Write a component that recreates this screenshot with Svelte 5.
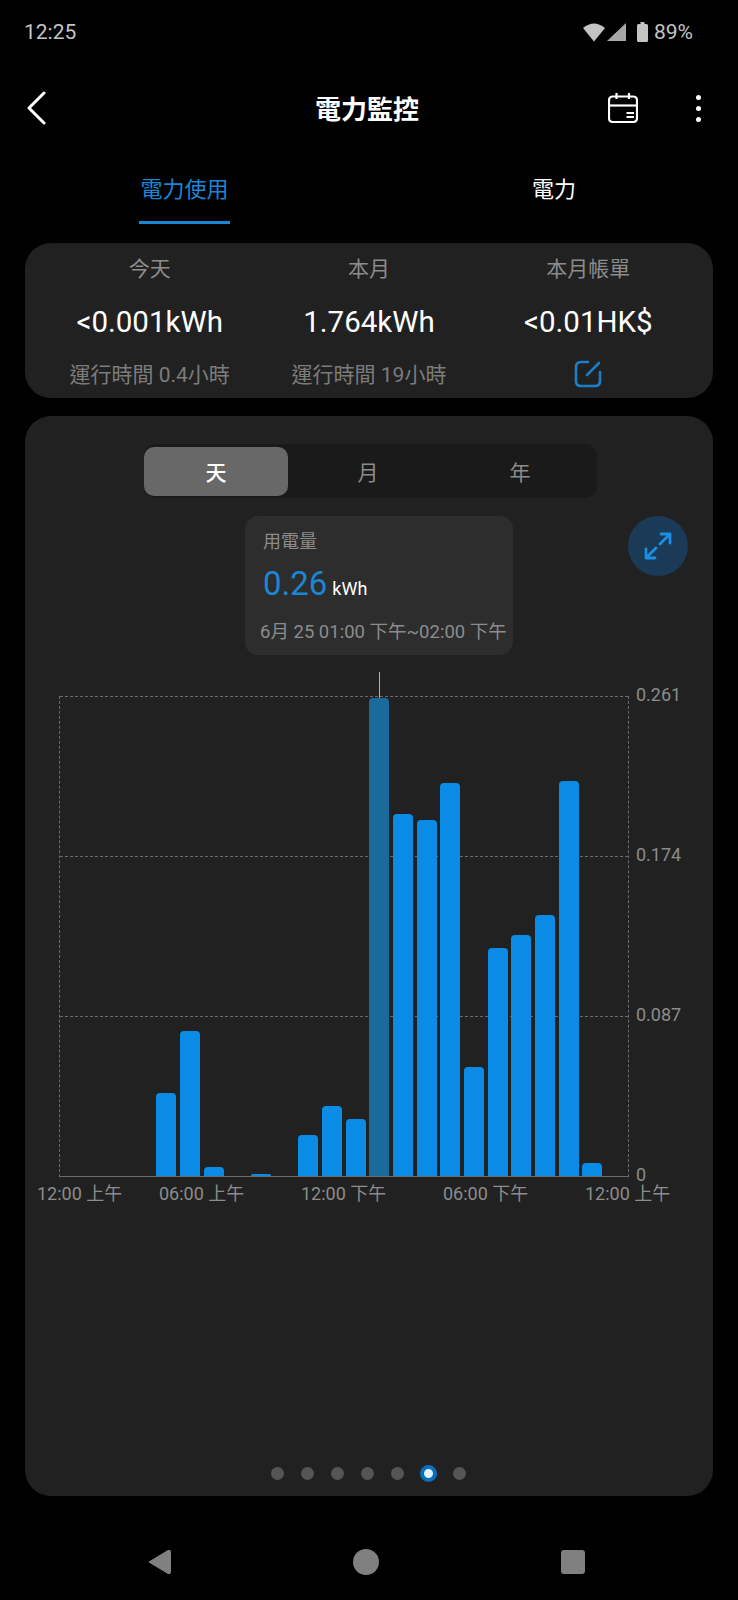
<script lang="ts">
	const stats = [
		{ label: '今天', value: '<0.001kWh', sub: '運行時間 0.4小時' },
		{ label: '本月', value: '1.764kWh', sub: '運行時間 19小時' },
		{ label: '本月帳單', value: '<0.01HK$', sub: '' }
	]

	// bar height in px, one per hour of the day
	const hours = [0, 0, 0, 0, 83, 145, 9, 0, 2, 0, 41, 70, 57, 478, 362, 356, 393, 109, 228, 241, 261, 395, 13, 0]
	const selectedHour = 13

	const yLabels = ['0.261', '0.174', '0.087', '0']
	const xLabels = ['12:00 上午', '06:00 上午', '12:00 下午', '06:00 下午', '12:00 上午']
	const dots = [0, 1, 2, 3, 4, 5, 6]
	const activeDot = 5
</script>

<div class="screen">
	<header class="status-bar">
		<span class="clock">12:25</span>
		<div class="status-icons">
			<svg width="22" height="20" viewBox="0 0 22 20"><path d="M0 6 Q11 -3 22 6 L11 19.500 Z" fill="#c4c4c4" /></svg>
			<svg class="signal" width="19" height="20" viewBox="0 0 19 20"><path d="M19 1 V19 H0 Z" fill="#a8a8a8" /></svg>
			<svg class="battery" width="11" height="20" viewBox="0 0 11 20"><path d="M3.500 0 H7.500 V2 H9.500 Q11 2 11 3.500 V18.500 Q11 20 9.500 20 H1.500 Q0 20 0 18.500 V3.500 Q0 2 1.500 2 H3.500 Z" fill="#c4c4c4" /></svg>
			<span class="battery-level">89%</span>
		</div>
	</header>

	<nav class="app-bar">
		<svg class="back" width="20" height="34" viewBox="0 0 20 34" fill="none" stroke="#fff" stroke-width="3" stroke-linecap="round" stroke-linejoin="round"><path d="M17 2 L2 17 L17 32" /></svg>
		<h1 class="title">電力監控</h1>
		<svg class="calendar" width="30" height="30" viewBox="0 0 30 30" fill="none" stroke="#fff" stroke-width="2.200" stroke-linejoin="round"><path d="M5 3.500 H25 Q29 3.500 29 7.500 V25 Q29 29 25 29 H5 Q1 29 1 25 V7.500 Q1 3.500 5 3.500 Z" /><path d="M1 12.500 H29" /><path d="M8.500 0 V6 M21 0 V6" /><path d="M18.500 20 H26 M18.500 24 H26" stroke-width="2" /></svg>
		<div class="more"><span></span><span></span><span></span></div>
	</nav>

	<div class="tabs">
		<div class="tab active">電力使用</div>
		<div class="tab">電力</div>
	</div>

	<section class="card summary">
		{#each stats as stat}
			<div class="stat">
				<div class="stat-label">{stat.label}</div>
				<div class="stat-value">{stat.value}</div>
				{#if stat.sub}
					<div class="stat-sub">{stat.sub}</div>
				{:else}
					<svg class="edit" width="28" height="28" viewBox="0 0 28 28" fill="none" stroke="#1a7fc8" stroke-width="2.600" stroke-linecap="round" stroke-linejoin="round"><path d="M14 2 H7 Q2 2 2 7 V21 Q2 26 7 26 H21 Q26 26 26 21 V12" /><path d="M13 15 L25 3" /></svg>
				{/if}
			</div>
		{/each}
	</section>

	<section class="card chart-card">
		<div class="segment">
			<div class="segment-item active">天</div>
			<div class="segment-item">月</div>
			<div class="segment-item">年</div>
		</div>

		<div class="readout-row">
			<div class="readout">
				<div class="readout-title">用電量</div>
				<div class="readout-value"><span class="num">0.26</span> <span class="unit">kWh</span></div>
				<div class="readout-date">6月 25 01:00 下午~02:00 下午</div>
			</div>
			<button class="expand" aria-label="expand">
				<svg width="30" height="30" viewBox="0 0 30 30" fill="none" stroke="#1a8fe3" stroke-width="2.800" stroke-linecap="round" stroke-linejoin="round"><path d="M18 3 H27 V12 M27 3 L17 13" /><path d="M3 18 V27 H12 M3 27 L13 17" /></svg>
			</button>
		</div>

		<div class="chart">
			<div class="plot">
				<div class="gridline"></div>
				<div class="gridline"></div>
				<div class="gridline"></div>
				<div class="bars">
					{#each hours as h, i}
						<div class="slot">
							{#if i === selectedHour}
								<div class="cursor"></div>
							{/if}
							{#if h > 0}
								<div class="bar" class:selected={i === selectedHour} style="height: {h}px"></div>
							{/if}
						</div>
					{/each}
				</div>
			</div>
			<div class="y-axis">
				{#each yLabels as label}
					<span>{label}</span>
				{/each}
			</div>
		</div>

		<div class="x-axis">
			{#each xLabels as label}
				<span>{label}</span>
			{/each}
		</div>

		<div class="pager">
			{#each dots as d}
				<span class="dot" class:active={d === activeDot}></span>
			{/each}
		</div>
	</section>

	<footer class="nav-bar">
		<svg width="24" height="26" viewBox="0 0 24 26"><path d="M2 13 L21 1.500 Q23.500 0.500 23.500 3 V23 Q23.500 25.500 21 24.500 Z" fill="#808080" stroke="#808080" stroke-linejoin="round" /></svg>
		<span class="nav-home"></span>
		<span class="nav-recent"></span>
	</footer>
</div>

<style>
	:global(body) {
		margin: 0;
		background: #000;
	}

	.screen {
		width: 738px;
		height: 1600px;
		background: #000;
		color: #fff;
		font-family: Roboto, 'Noto Sans CJK TC', sans-serif;
		overflow: hidden;
		display: flex;
		flex-direction: column;
	}

	.status-bar {
		height: 64px;
		flex: none;
		padding: 0 45px 0 24px;
		display: flex;
		justify-content: space-between;
		align-items: center;
		color: #c4c4c4;
		font-size: 21px;
		box-sizing: border-box;
	}

	.status-icons {
		display: flex;
		align-items: center;
	}

	.signal {
		margin-left: 2px;
	}

	.battery {
		margin-left: 11px;
		margin-right: 6px;
	}

	.app-bar {
		height: 92px;
		flex: none;
		padding: 0 37px 0 27px;
		display: flex;
		align-items: center;
		box-sizing: border-box;
	}

	.back,
	.calendar,
	.more {
		margin-bottom: 4px;
	}

	.title {
		flex: 1;
		margin: 0 0 5px;
		text-align: center;
		font-size: 26px;
		font-weight: 700;
		padding-left: 79px;
	}

	.calendar {
		margin-right: 58px;
	}

	.more {
		display: flex;
		flex-direction: column;
		gap: 6px;
		width: 5px;
	}

	.more span {
		width: 5px;
		height: 5px;
		border-radius: 50%;
		background: #fff;
	}

	.tabs {
		height: 67px;
		flex: none;
		padding-left: 139px;
		display: flex;
	}

	.tab {
		font-size: 22px;
		height: 67px;
		line-height: 68px;
	}

	.tab.active {
		width: 91px;
		color: #1a87d6;
		text-align: center;
		position: relative;
		margin-right: 302px;
	}

	.tab.active::after {
		content: '';
		position: absolute;
		left: 0;
		right: 0;
		top: 65px;
		height: 3px;
		background: #1a87d6;
	}

	.card {
		margin: 0 25px;
		background: #212121;
		border-radius: 26px;
	}

	.summary {
		height: 155px;
		flex: none;
		margin-top: 20px;
		padding: 0 15px;
		display: grid;
		grid-template-columns: repeat(3, 1fr);
		box-sizing: border-box;
	}

	.stat {
		display: flex;
		flex-direction: column;
		align-items: center;
	}

	.stat-label {
		font-size: 21px;
		color: #8c8c8c;
		height: 52px;
		line-height: 52px;
	}

	.stat-value {
		font-size: 29.500px;
		height: 54px;
		line-height: 54px;
	}

	.stat-sub {
		font-size: 21px;
		color: #7c7c7c;
		height: 49px;
		line-height: 53px;
	}

	.edit {
		margin-top: 11px;
	}

	.chart-card {
		margin-top: 18px;
		height: 1080px;
		flex: none;
		padding: 28px 0 0;
		box-sizing: border-box;
		position: relative;
		display: flex;
		flex-direction: column;
	}

	.segment {
		width: 453px;
		height: 54px;
		margin-left: 119px;
		padding: 3px 0;
		box-sizing: border-box;
		display: flex;
		background: #1a1a1a;
		border-radius: 12px;
	}

	.segment-item {
		width: 152px;
		height: 49px;
		text-align: center;
		line-height: 52px;
		font-size: 21px;
		color: #8c8c8c;
		border-radius: 10px;
	}

	.segment-item.active {
		width: 144px;
		background: #686868;
		color: #fff;
		font-weight: 500;
		margin-right: 4px;
	}

	.readout-row {
		margin-top: 18px;
		height: 139px;
		padding-left: 220px;
		display: flex;
		align-items: flex-start;
	}

	.readout {
		width: 268px;
		height: 139px;
		box-sizing: border-box;
		padding: 13px 0 0 15px;
		background: #2d2d2d;
		border-radius: 13px;
	}

	.readout-title {
		font-size: 18px;
		line-height: 26px;
		color: #8c8c8c;
		padding-left: 3px;
	}

	.readout-value {
		line-height: 50px;
		padding-left: 3px;
		margin-top: 4px;
	}

	.num {
		font-size: 33px;
		color: #1a87d6;
	}

	.unit {
		font-size: 18px;
		color: #fff;
		margin-left: 1px;
	}

	.readout-date {
		font-size: 18.500px;
		line-height: 26px;
		color: #8c8c8c;
		margin-top: 4px;
		white-space: nowrap;
	}

	.expand {
		width: 60px;
		height: 60px;
		margin-left: 115px;
		padding: 0;
		border: none;
		border-radius: 50%;
		background: #1b3a57;
		display: flex;
		align-items: center;
		justify-content: center;
	}

	.chart {
		margin-top: 41px;
		display: flex;
		padding-left: 34px;
	}

	.plot {
		width: 568px;
		height: 480px;
		border-left: 1px dashed #6a6a6a;
		border-right: 1px dashed #6a6a6a;
		border-bottom: 1px solid #6a6a6a;
		position: relative;
		display: grid;
		grid-template-rows: repeat(3, 1fr);
	}

	.gridline {
		border-top: 1px dashed #6a6a6a;
	}

	.bars {
		position: absolute;
		inset: 0;
		display: grid;
		grid-template-columns: repeat(24, 1fr);
		align-items: end;
	}

	.slot {
		height: 100%;
		display: flex;
		flex-direction: column;
		justify-content: flex-end;
		align-items: center;
		position: relative;
	}

	.bar {
		width: 20px;
		background: #0a8ce6;
		border-radius: 4px 4px 0 0;
	}

	.bar.selected {
		background: #1a6a9c;
	}

	.cursor {
		position: absolute;
		top: -24px;
		left: 50%;
		width: 1px;
		height: 26px;
		background: #b0b0b0;
	}

	.y-axis {
		height: 500px;
		margin-bottom: -20px;
		margin-left: 7px;
		display: flex;
		flex-direction: column;
		justify-content: space-between;
		font-size: 18px;
		line-height: 20px;
		color: #8c8c8c;
		transform: translateY(-11px);
	}

	.x-axis {
		margin-top: 5px;
		padding-left: 12px;
		display: flex;
		font-size: 18px;
		line-height: 24px;
		color: #8c8c8c;
		white-space: nowrap;
	}

	.x-axis span {
		width: 142px;
		flex: none;
	}

	.x-axis span:first-child {
		width: 122px;
	}

	.pager {
		position: absolute;
		left: 246px;
		bottom: 14px;
		display: flex;
		align-items: center;
		gap: 17px;
	}

	.dot {
		width: 13px;
		height: 13px;
		border-radius: 50%;
		background: #555;
	}

	.dot.active {
		width: 9px;
		height: 9px;
		background: #dff4ff;
		border: 4px solid #0a6fb8;
		margin-left: -1px;
		margin-right: -1px;
	}

	.nav-bar {
		flex: 1;
		display: flex;
		align-items: center;
		padding: 28px 153px 0 147px;
		justify-content: space-between;
	}

	.nav-home {
		width: 26px;
		height: 26px;
		border-radius: 50%;
		background: #808080;
	}

	.nav-recent {
		width: 24px;
		height: 24px;
		border-radius: 3px;
		background: #808080;
	}
</style>
